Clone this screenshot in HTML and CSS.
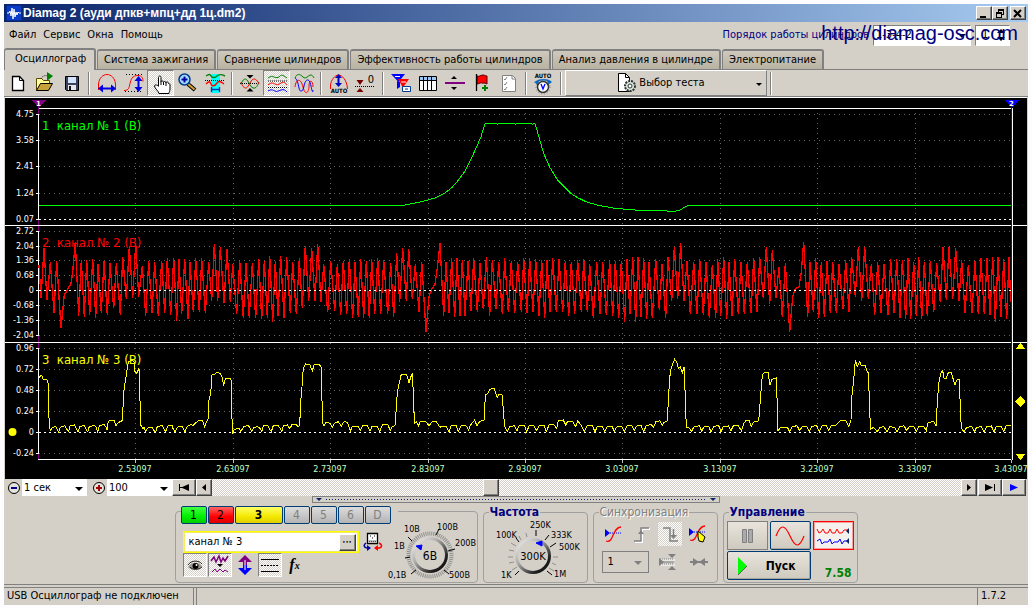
FILE: index.html
```html
<!DOCTYPE html>
<html lang="ru">
<head>
<meta charset="utf-8">
<title>Diamag 2</title>
<link rel="stylesheet" href="styles.css">
</head>
<body>
<div class="window">
  <header class="titlebar">
    <svg class="app-icon" width="16" height="16" viewBox="0 0 16 16"><rect width="16" height="16" fill="#0a3cc8"/><rect x="0" y="0" width="16" height="16" fill="none" stroke="#061c5a"/><path d="M1 8h2l1-2 1 5 1-8 1 11 1-10 1 8 1-5 1 3 1-3 1 1h2" fill="none" stroke="#fff"/></svg>
    <h1 class="title">Diamag 2 (ауди дпкв+мпц+дд 1ц.dm2)</h1>
    <button class="win-btn" aria-label="Свернуть"><svg width="12" height="11" viewBox="0 0 12 11"><path d="M2 8h6v2H2z"/></svg></button>
    <button class="win-btn" aria-label="Восстановить"><svg width="12" height="11" viewBox="0 0 12 11"><path d="M4 1h6v2H4zM4 3h1v1H4zM9 3h1v4H8V6h1zM2 4h6v2H2zM2 6h1v4H2zM7 6h1v4H7zM3 9h4v1H3z"/></svg></button>
    <button class="win-btn win-close" aria-label="Закрыть"><svg width="12" height="11" viewBox="0 0 12 11"><path d="M2 2l7 7M9 2L2 9" stroke="#000" stroke-width="2"/></svg></button>
  </header>

  <div class="menubar">
    <nav class="menu">
      <a href="#">Файл</a><a href="#">Сервис</a><a href="#">Окна</a><a href="#">Помощь</a>
    </nav>
    <div class="order">
      <label for="order">Порядок работы цилиндров</label>
      <span class="drop order-drop"><select id="order"><option>1-3-4-2</option></select></span>
      <span class="spin"><input id="first" aria-label="Первый цилиндр" value="1"><svg width="10" height="14" viewBox="0 0 10 14"><path d="M5 1l4 4H1zM5 13l4-4H1z"/></svg></span>
      <span class="watermark">http://diamag-osc.com</span>
    </div>
  </div>

  <nav class="tabs">
    <button class="tab tab-on">Осциллограф</button>
    <button class="tab">Система зажигания</button>
    <button class="tab">Сравнение цилиндров</button>
    <button class="tab">Эффективность работы цилиндров</button>
    <button class="tab">Анализ давления в цилиндре</button>
    <button class="tab">Электропитание</button>
  </nav>

  <div class="toolbar">
    <button class="tool" aria-label="Новый"><svg viewBox="0 0 24 24"><path d="M6.500 5.500h7l4 4v10h-11z" fill="#fff" stroke="#000" stroke-width="1.300"/><path d="M13.500 5.500v4h4" fill="none" stroke="#000"/></svg></button>
    <button class="tool" aria-label="Открыть"><svg viewBox="0 0 24 24"><path d="M3.500 19.500v-12h5l2 2h6v4" fill="#ffff9c" stroke="#5a4a00"/><path d="M3.500 19.500l4-7h12l-4 7z" fill="#c8a03c" stroke="#000"/><path d="M8 8c1-3 4-4 7-3" fill="none" stroke="#222" stroke-dasharray="1 1"/><path d="M14 1l6 4-6 5z" fill="#008000"/></svg></button>
    <button class="tool" aria-label="Сохранить"><svg viewBox="0 0 24 24"><path d="M5.500 5.500h13v14h-12l-1-1z" fill="#39435c" stroke="#000"/><path d="M8 6h8v6H8z" fill="#d5e4fb"/><path d="M8 14h8v5H8z" fill="#e8e8e8"/><path d="M9 15h2v4H9z" fill="#111"/></svg></button>
    <i class="sep"></i>
    <button class="tool" aria-label="Период"><svg viewBox="0 0 24 24"><path d="M3.500 19v-6C4 7 8 3.500 12 3.500S20 7 20.500 13v6" fill="none" stroke="red"/><path d="M5 17.500h14" stroke="#0000e0" stroke-width="2"/><path d="M3 17.500l5-4v8zM21 17.500l-5-4v8z" fill="#0000e0"/></svg></button>
    <button class="tool" aria-label="Амплитуда"><svg viewBox="0 0 24 24"><path d="M4 3.500h18M3 20.500h17" stroke="#000" stroke-dasharray="1 2"/><path d="M2 19.500c5 0 5-3 6-7s2-8 8-8c4 0 5 3 5 6" fill="none" stroke="red"/><path d="M16.500 8v10" stroke="#0000e0" stroke-width="2"/><path d="M16.500 5l4 5h-8zM16.500 21l4-5h-8z" fill="#0000e0"/></svg></button>
    <button class="tool pressed" aria-label="Рука"><svg viewBox="0 0 24 24"><path d="M9.500 15V6.500c0-2 2.500-2 2.500 0V11c0-1.500 2.500-1.500 2.500.5 0-1.500 2.500-1.500 2.500.5 0-1.500 2.500-1.500 2.500.5 1 0 1.500.5 1.500 1.500v4c0 2-1 3-1 4.500H10c0-2-4.500-5-4.500-7.500 0-1.500 2.500-1.500 4 .5M12 11v3M14.500 11v3M17 12v3" fill="#fff" stroke="#000"/></svg></button>
    <button class="tool" aria-label="Лупа"><svg viewBox="0 0 24 24"><path d="M12 13l7 6" stroke="#000" stroke-width="4"/><path d="M12 13l6.500 5.500" stroke="#d8a030" stroke-width="2"/><circle cx="8.500" cy="8.500" r="5.500" fill="#a8dcff" stroke="#003c8c" stroke-width="1.500"/><path d="M5.500 8.500h6M8.500 5.500v6" stroke="#0000a0" stroke-width="2"/></svg></button>
    <button class="tool" aria-label="Участок"><svg viewBox="0 0 24 24"><path d="M8 3h9v19H8z" fill="#0ff"/><path d="M2 9.500h20" stroke="#000" stroke-dasharray="1 1"/><path d="M3 5c3-2 4-2 5 0s4 2 6 0 4-2 8 0" fill="none" stroke="green" stroke-width="1.400"/><path d="M3 13c3-3 4-3 5 0s4 2 6-1 4-1 7 1" fill="none" stroke="red" stroke-width="1.400"/><path d="M8.500 16v5M16.500 16v5M9 18.500h7" stroke="#003cb4" stroke-width="1.400"/></svg></button>
    <i class="sep"></i>
    <button class="tool" aria-label="Центр"><svg viewBox="0 0 24 24"><path d="M2 12.500h19" stroke="#000" stroke-dasharray="1 1"/><path d="M3 13c2-5 4-6 6-4s3 7 6 8 5-3 6-6" fill="none" stroke="green"/><path d="M3 11c1 4 3 6 5 6s4-6 6-8 5-1 7 4" fill="none" stroke="red"/><path d="M12 7.500L8.500 4h7zM12 17l-3.500 3.500h7z"/></svg></button>
    <button class="tool pressed" aria-label="Раздельно"><svg viewBox="0 0 24 24"><path d="M3 10h19M3 16.500h19" stroke="#000" stroke-dasharray="1 1"/><path d="M3 7c3-2 4-2 6-1s4 1 6-1 4 0 7 2" fill="none" stroke="green"/><path d="M3 14c3-3 5-2 7-1s3 1 6-1 4 0 6 2" fill="none" stroke="red"/><path d="M3 20c3-2 5-1 7 0s3 0 6-1 4 0 6 2" fill="none" stroke="#00f"/></svg></button>
    <button class="tool" aria-label="Вместе"><svg viewBox="0 0 24 24"><path d="M3 7c2-5 5-4 8-1s5-2 8-2c1 0 2 1 3 3" fill="none" stroke="green"/><path d="M3 16c1-9 6-9 8 0s6 6 6-1 4-6 4 1" fill="none" stroke="red"/><path d="M3 7c2 1 3 5 4 10s4 4 5-2 5-10 7 0 2 4 2 4" fill="none" stroke="#00f"/></svg></button>
    <i class="sep"></i>
    <button class="tool" aria-label="Авто"><svg viewBox="0 0 24 24"><path d="M3.500 18v-4C4 9 8 4 11.500 4S20 9 20.500 18" fill="none" stroke="red"/><path d="M11.500 6v7" stroke="#0000c0" stroke-width="2"/><path d="M11.500 3l3.500 4H8zM11.500 16l3.500-4H8z" fill="#0000c0"/><text class="icon-text" x="12" y="22">AUTO</text></svg></button>
    <button class="tool" aria-label="Ноль"><svg viewBox="0 0 24 24"><path d="M1 15.500h20" stroke="#000" stroke-dasharray="1 1"/><path d="M2.500 9h7L6 14zM2.500 21h7L6 17z" fill="#780000"/><text class="icon-zero" x="17" y="12">0</text></svg></button>
    <i class="sep"></i>
    <button class="tool" aria-label="Фильтр"><svg viewBox="0 0 24 24"><path d="M2 3h14L9.500 11z" fill="#00f"/><path d="M8 10v8l3-2v-5z" fill="#00f"/><path d="M9 8h11l-5 7v4l-2-4z" fill="red"/><path d="M6 5.500h5M12 11h5" stroke="#fff"/><path d="M13.500 15.500h8v5h-8z" fill="#fff" stroke="#003c96"/><path d="M16 18h3" stroke="#003c96"/></svg></button>
    <button class="tool" aria-label="Таблица"><svg viewBox="0 0 24 24"><path d="M3.500 5.500h17v14h-17z" fill="#fff" stroke="#000"/><path d="M4 6h16v3H4z" fill="#9cc8f8"/><path d="M3 9.500h18M7.500 6v13M11.500 6v13M15.500 6v13" stroke="#000"/></svg></button>
    <button class="tool" aria-label="Линия"><svg viewBox="0 0 24 24"><path d="M2 12h20" stroke="purple" stroke-width="2"/><path d="M8 8h6l-3-3zM8 16h6l-3 3z"/></svg></button>
    <button class="tool" aria-label="Флаг"><svg viewBox="0 0 24 24"><path d="M7 5c3 1 3-1 6-1 2 0 2 1 4 1v8c-3-2-4 0-5-1s-3 1-5 1z" fill="red" stroke="#500"/><path d="M6.500 3v17" stroke="#000" stroke-width="1.300"/><path d="M15 14v6M12 17h6" stroke="green" stroke-width="2"/></svg></button>
    <button class="tool" aria-label="Проверка"><svg viewBox="0 0 24 24"><path d="M5.500 4.500h10l3 3v13h-13z" fill="#fff" stroke="#808080"/><path d="M7 8l1 1 2-3M7 13l1 1 2-3M7 18l1 1 2-3M15 5v3h3" fill="none" stroke="#808080"/></svg></button>
    <i class="sep"></i>
    <button class="tool" aria-label="Автонапряжение"><svg viewBox="0 0 24 24"><text class="icon-text" x="11" y="7">AUTO</text><path d="M4 11c4-3 11-3 15 0" fill="none" stroke="#06c" stroke-width="1.600"/><path d="M2 11l5-2-1 5zM20 11l-5-2 1 5z" fill="#06c"/><circle cx="11" cy="16" r="5.500" fill="#fff" stroke="#333" stroke-width="1.500"/><circle cx="11" cy="16" r="7" fill="none" stroke="#777" stroke-dasharray="1 2"/><path d="M9 13l2 5 2-5" fill="none" stroke="#00f" stroke-width="1.300"/></svg></button>
    <i class="sep"></i>
    <button class="test-btn"><svg width="22" height="22" viewBox="0 0 22 22"><path d="M3.500 1.500h7l4 4v14h-11z" fill="#fff" stroke="#000"/><path d="M10.500 1.500v4h4" fill="none" stroke="#000"/><circle cx="15" cy="14" r="5" fill="#d4e8dc" stroke="#333" stroke-width="2" stroke-dasharray="2 1"/><circle cx="15" cy="14" r="2" fill="#fff" stroke="#333"/></svg><span>Выбор теста</span></button>
    <i class="sep"></i>
  </div>

  <svg class="plot" id="plot" viewBox="5 98 1022 381" role="img" aria-label="Осциллограмма"></svg>

  <div class="scrollrow">
    <button class="round-btn" aria-label="Уменьшить"><svg width="14" height="14" viewBox="0 0 14 14"><circle cx="7" cy="7" r="5.500" fill="#e4e2dc" stroke="#000"/><path d="M4 7h6" stroke="#00008c" stroke-width="2"/></svg></button>
    <span class="drop scale-drop"><select aria-label="Время"><option>1 сек</option></select></span>
    <button class="round-btn gap-left" aria-label="Увеличить"><svg width="14" height="14" viewBox="0 0 14 14"><circle cx="7" cy="7" r="5.500" fill="#e4e2dc" stroke="#000"/><path d="M4 7h6M7 4v6" stroke="#a00000" stroke-width="2"/></svg></button>
    <span class="drop scale-drop"><select aria-label="Масштаб"><option>100</option></select></span>
    <button class="bevel wide" aria-label="В начало"><svg width="12" height="9" viewBox="0 0 12 9"><path d="M1 1h1v7H1zM2 4h2v1H2zM3 4.500L11 1v7z"/></svg></button>
    <button class="bevel" aria-label="Назад"><svg width="8" height="9" viewBox="0 0 8 9"><path d="M2 4.500L6 1v7z"/></svg></button>
    <input class="scroll" type="range" min="0" max="100" value="37" aria-label="Прокрутка">
    <button class="bevel" aria-label="Вперёд"><svg width="8" height="9" viewBox="0 0 8 9"><path d="M6 4.500L2 1v7z"/></svg></button>
    <button class="bevel wide gap-1" aria-label="В конец"><svg width="12" height="9" viewBox="0 0 12 9"><path d="M9 4.500L1 1v7zM10 1h1v7h-1z"/></svg></button>
    <button class="bevel wide" aria-label="Пуск просмотра"><svg width="12" height="9" viewBox="0 0 12 9"><path d="M10 4.500L2 1v7z" fill="#00f"/></svg></button>
  </div>

  <main class="panel">
    <button class="splitter" aria-label="Свернуть панель"><i></i></button>
    <div class="groups">
      <fieldset class="group group-channel">
        <legend class="channels">
          <button class="ch ch-1">1</button><button class="ch ch-2">2</button><button class="ch ch-3">3</button><button class="ch">4</button><button class="ch">5</button><button class="ch">6</button><button class="ch">D</button>
        </legend>
        <div class="channel-box">
          <div class="row">
            <span class="name-box"><input aria-label="Имя канала" value="канал № 3"><button class="dots" aria-label="Выбрать">•••</button></span>
            <button class="flat swap" aria-label="Поменять"><svg width="20" height="20" viewBox="0 0 20 20"><path d="M4.500 1.500h10v10h-10z" fill="#fff" stroke="#000" stroke-width="1.300"/><path d="M5 8h9v3H5z" fill="#bbb"/><path d="M6 9.500h8" stroke="green" stroke-dasharray="1 1"/><path d="M7 4h1M9 6h1M11 4h1" stroke="#000"/><path d="M3 11c-3 2-2 5 2 5" fill="none" stroke="#0000a0" stroke-width="1.500"/><path d="M4 13l4 3-4 3z" fill="#0000a0"/><path d="M16 11c4 2 3 5-1 5" fill="none" stroke="red" stroke-width="1.500"/><path d="M15 13l-4 3 4 3z" fill="red"/></svg></button>
          </div>
          <div class="row">
            <button class="flat pressed" aria-label="Видимость"><svg width="22" height="22" viewBox="0 0 22 22"><path d="M4 13c2-5 12-6 14 0-3 4-11 4-14 0z" fill="#a09a90"/><path d="M4 11c3-5 11-5 14-1M6 13c2 3 9 3 12 0" fill="none" stroke="#222"/><circle cx="11.500" cy="12" r="3" fill="#000"/><circle cx="12.500" cy="11" r="1" fill="#fff"/></svg></button>
            <button class="flat pressed" aria-label="Сглаживание"><svg width="22" height="22" viewBox="0 0 22 22"><path d="M2 7l3-4 2 5 3-6 2 6 2-4 2 3 3-5" fill="none" stroke="purple" stroke-width="1.500"/><path d="M8 10h6l-3 3z"/><path d="M3 18l3-3 2 3 3-3 3 3 2-2 3 2" fill="none" stroke="purple"/></svg></button>
            <button class="flat" aria-label="Смещение"><svg width="22" height="22" viewBox="0 0 22 22"><path d="M11 1l7 7h-5v3H9V8H4z" fill="purple"/><path d="M11 21l7-7h-5v-3H9v3H4z" fill="#00f"/><path d="M11 6v10" stroke="#fff"/></svg></button>
            <button class="flat pressed" aria-label="Линии"><svg width="22" height="22" viewBox="0 0 22 22"><path d="M2 5.500h18M2 17.500h18" stroke="#000"/><path d="M2 11.500h18" stroke="#000" stroke-dasharray="2 1"/></svg></button>
            <button class="flat fx" aria-label="Функция"><i>f</i><small>x</small></button>
          </div>
        </div>
        <svg class="knob" width="96" height="60" viewBox="384 522 96 60" role="img" aria-label="Предел 6В">
          <g class="knob-dial" transform="translate(430 556)"><circle r="21.500" class="ring"/><circle r="18" fill="url(#metal)"/><circle r="15" fill="#d4d0c8"/><path class="tickline" d="M-18-14l-4-4M6-20l3-6M18-4l7-2M-20 2l-5 1M-14 15l-5 4M14 15l5 4"/><path d="M-14-9l6-1-1 5z" fill="#00f" stroke="#00f"/></g>
          <text class="kt" x="404" y="533">10В</text><text class="kt" x="437" y="531">100В</text><text class="kt" x="394" y="550">1В</text><text class="kt" x="455" y="547">200В</text><text class="kt" x="388" y="579">0,1В</text><text class="kt" x="449" y="579">500В</text><text class="kv" x="430" y="561">6В</text>
        </svg>
      </fieldset>

      <fieldset class="group group-freq">
        <legend>Частота</legend>
        <svg class="knob" width="100" height="62" viewBox="486 519 100 62" role="img" aria-label="Частота 300K">
          <defs><linearGradient id="metal" x1="0" y1="0" x2="1" y2="1"><stop offset="0" stop-color="#fff"/><stop offset=".4" stop-color="#aaa"/><stop offset=".75" stop-color="#222"/><stop offset="1" stop-color="#000"/></linearGradient></defs>
          <g class="knob-dial" transform="translate(533 556)"><path class="minor" d="M-17-10l-5-3M-19-5l-5-1M-20 1h-5M-19 6l-5 1M-12-16l-2-4M-6-19l-1-4M20 1h5M19 7l4 2M-16 11l-5 3M16 12l5 3"/><circle r="18" fill="url(#metal)"/><circle r="15" fill="#d4d0c8"/><path class="tickline" d="M3-20v-6M12-16l4-5M17-9l6-4M-14 15l-4 4M14 15l5 4M-14-14l-3-4"/><path d="M3-13l6-2v5z" fill="#00f" stroke="#00f"/></g>
          <text class="kt" x="530" y="528">250K</text><text class="kt" x="496" y="538">100K</text><text class="kt" x="551" y="538">333K</text><text class="kt" x="559" y="550">500K</text><text class="kt" x="501" y="578">1K</text><text class="kt" x="554" y="577">1M</text><text class="kv kv-small" x="533" y="560">300K</text>
        </svg>
      </fieldset>

      <fieldset class="group group-sync">
        <legend>Синхронизация</legend>
        <div class="row spread">
          <button class="flat" aria-label="Уровень"><svg width="22" height="22" viewBox="0 0 22 22"><path d="M3 10h16" stroke="#00f" stroke-dasharray="1 1"/><path d="M2 6v8l5-4z" fill="#00f"/><path d="M3 18c8 3 6-14 15-14" fill="none" stroke="red" stroke-width="1.300"/></svg></button>
          <button class="flat" aria-label="Фронт"><svg width="22" height="22" viewBox="0 0 22 22"><path d="M4 19h7V6h8" fill="none" stroke="#fff" stroke-width="2"/><path d="M3 18h7V5h8" fill="none" stroke="#808080" stroke-width="1.500"/><path d="M7 11l3-4 3 4z" fill="#808080"/></svg></button>
          <button class="flat hatch" aria-label="Спад"><svg width="22" height="22" viewBox="0 0 22 22"><path d="M4 5h7v13h8" fill="none" stroke="#808080" stroke-width="1.500"/><path d="M14.500 6v7" stroke="#808080" stroke-width="1.500"/><path d="M11 12h7l-3.500 4z" fill="#808080"/></svg></button>
          <button class="flat" aria-label="Выбор уровня"><svg width="22" height="22" viewBox="0 0 22 22"><path d="M3 9h16" stroke="#00f" stroke-dasharray="1 1"/><path d="M2 5v8l5-4z" fill="#00f"/><path d="M3 17c8 3 6-14 15-14" fill="none" stroke="red" stroke-width="1.300"/><path d="M11 8l7 6-2 5-4-1-1-4z" fill="#ff0" stroke="#000"/></svg></button>
        </div>
        <div class="row spread">
          <span class="drop sync-drop"><select aria-label="Канал синхронизации" disabled><option>1</option></select></span>
          <button class="flat" aria-label="Смещение"><svg width="22" height="22" viewBox="0 0 22 22"><path d="M4 9h14M4 14h14" stroke="#fff"/><path d="M3 8h14M3 13h14" stroke="#808080" stroke-dasharray="1 1"/><path d="M2 7v8l5-4zM11 3h8l-4 4zM11 19h8l-4-4z" fill="#808080"/><path d="M5 11h12" stroke="#808080"/></svg></button>
          <button class="flat" aria-label="Сжатие"><svg width="22" height="22" viewBox="0 0 22 22"><path d="M2 11h18" stroke="#808080" stroke-width="2"/><path d="M5 7v8l6-4zM17 7v8l-6-4z" fill="#808080"/></svg></button>
        </div>
      </fieldset>

      <fieldset class="group group-run">
        <legend>Управление</legend>
        <div class="row run-top">
          <button class="run" aria-label="Пауза"><svg width="34" height="22" viewBox="0 0 34 22"><path d="M12.500 4.500h4v13h-4zM18.500 4.500h4v13h-4z" fill="#aaa" stroke="#808080"/></svg></button>
          <button class="run run-on" aria-label="Синус"><svg width="34" height="22" viewBox="0 0 34 22"><path d="M3 11C8-2 12 0 17 11s9 13 14 0" fill="none" stroke="red" stroke-width="1.200"/></svg></button>
          <button class="run run-red" aria-label="Поток"><svg width="34" height="22" viewBox="0 0 34 22"><path d="M1 4l2 4 2-1 2-3 2 4h3l2-4 2 4h3l2-4 2 4h3l2-3h4" fill="none" stroke="red"/><path d="M1 16l3-2 2 5 2-2h4l2-3 2 5 2-2h4l2-3 2 5 2-3h4" fill="none" stroke="#00f"/><path d="M33 3v6l-3-3zM33 13v6l-3-3z" fill="#0a246a"/></svg></button>
        </div>
        <div class="row run-bottom">
          <button class="run run-start"><svg width="12" height="22" viewBox="0 0 12 22"><path d="M2 2v18l9-9z" fill="#0f0"/><path d="M2 20l9-9" stroke="#555"/></svg><span>Пуск</span></button>
          <output class="value">7.58</output>
        </div>
      </fieldset>
    </div>
  </main>

  <footer class="status"><span class="status-main">USB Осциллограф не подключен</span><span class="status-mid"></span><span class="status-ver">1.7.2</span></footer>
</div>
<script src="plot.js"></script>
</body>
</html>
```
FILE: styles.css
```css
* { box-sizing: border-box; }
body {
  margin: 0;
  padding: 4px;
  background: #fdfdff;
  color: #000;
  font: 11px/14px "DejaVu Sans Condensed", "Liberation Sans", sans-serif;
}
button, input, select { font: inherit; color: inherit; margin: 0; padding: 0; border: 0; border-radius: 0; }
button { display: flex; align-items: center; justify-content: center; background: none; }
svg { display: block; flex: none; }
.window { display: flex; flex-direction: column; background: #d4d0c8; min-height: calc(100vh - 8px); }

.titlebar { display: flex; align-items: center; height: 18px; padding: 0 2px; background: linear-gradient(90deg, #0a246a, #a6caf0); }
.title { flex: 1; margin: 0 0 0 1px; color: #fff; font: bold 12px/18px "Liberation Sans", sans-serif; }
.win-btn, .bevel, .dots {
  background: #d4d0c8;
  border: 1px solid;
  border-color: #fff #404040 #404040 #fff;
  box-shadow: inset -1px -1px #808080;
}
.win-btn { width: 16px; height: 14px; }
.win-close { margin-left: 2px; }

.menubar { display: flex; justify-content: space-between; align-items: center; height: 26px; padding: 0 18px 0 5px; }
.menu { display: flex; gap: 7px; }
.menu a { color: #000; text-decoration: none; }
.order { position: relative; display: flex; align-items: center; gap: 4px; color: #000080; }
.drop { position: relative; display: inline-flex; background: #fff; color: #000; }
.drop select { appearance: none; flex: 1; width: 100%; padding-left: 2px; background: none; opacity: 1; }
.drop::after { content: ""; position: absolute; right: 4px; top: 50%; margin-top: -1px; border: 4px solid transparent; border-top-color: #000; border-bottom: 0; pointer-events: none; }
.order-drop { width: 98px; height: 21px; border: 1px solid; border-color: #808080 #fff #fff #808080; }
.spin { display: flex; align-items: center; width: 35px; height: 21px; background: #fff; color: #000; border: 1px solid; border-color: #808080 #fff #fff #808080; }
.spin input { width: 20px; padding-left: 6px; background: none; }
.watermark { position: absolute; right: -8px; top: -2px; font: 20px/20px "Liberation Sans", sans-serif; color: #000080; white-space: nowrap; }

.tabs { display: flex; align-items: flex-end; gap: 1px; height: 22px; border-bottom: 1px solid #808080; }
.tab { height: 20px; padding: 0 6px; border: 1px solid #808080; border-width: 2px 2px 0 1px; border-radius: 3px 3px 0 0; background: linear-gradient(#cfc9bd, #b8b2a2); white-space: nowrap; }
.tab-on { height: 22px; margin-bottom: -1px; padding: 0 8px 2px 10px; background: #d4d0c8; }

.toolbar { display: flex; align-items: center; height: 27px; border-bottom: 1px solid #808080; }
.tool { width: 27px; height: 26px; flex: none; }
.tool svg { width: 24px; height: 24px; }
.pressed, .hatch { background: conic-gradient(#fff 25%, #d4d0c8 0 50%, #fff 0 75%, #d4d0c8 0) 0 0 / 2px 2px; }
.pressed { border: 1px solid; border-color: #808080 #fff #fff #808080; }
.sep { flex: none; width: 2px; height: 23px; margin: 0 3px; border-left: 1px solid #808080; border-right: 1px solid #fff; }
.icon-text { font: bold 6px "DejaVu Sans Condensed", sans-serif; text-anchor: middle; }
.icon-zero { font: 11px "DejaVu Sans Condensed", sans-serif; text-anchor: middle; }
.test-btn { position: relative; width: 202px; height: 26px; gap: 2px; padding-right: 12px; border: 1px solid; border-color: #fff #808080 #808080 #fff; }
.test-btn::after { content: ""; position: absolute; right: 4px; top: 12px; border: 3px solid transparent; border-top-color: #000; border-bottom: 0; }

.plot { width: calc(100% - 2px); margin-left: 1px; height: auto; background: #000; border-top: 1px solid #fff; }
.plot text { font: 9px "DejaVu Sans Condensed", sans-serif; }
.plot .name { font-size: 13px; white-space: pre; }
.plot .mark { font: bold 7px "DejaVu Sans", sans-serif; fill: #fff; text-anchor: middle; }
.plot path, .plot line { shape-rendering: crispEdges; }
.plot .grid { stroke: #666; stroke-dasharray: 1 4; }
.plot .zero { stroke: #fff; stroke-dasharray: 2 3; }
.plot .frame { stroke: #fff; }
.plot .level { fill: #fff; text-anchor: end; }
.plot .time { fill: #c0ffc0; text-anchor: middle; }

.scrollrow { display: flex; height: 17px; padding: 0 2px 0 1px; }
.round-btn { width: 17px; }
.gap-left { margin-left: 3px; }
.gap-1 { margin-left: 1px; }
.scale-drop { width: 65px; }
.bevel { width: 16px; flex: none; }
.wide { width: 24px; }
.scroll { appearance: none; flex: 1; min-width: 0; height: 17px; background: conic-gradient(#fff 25%, #d4d0c8 0 50%, #fff 0 75%, #d4d0c8 0) 0 0 / 2px 2px; }
.scroll::-webkit-slider-thumb { appearance: none; width: 16px; height: 17px; background: #d4d0c8; border: 1px solid; border-color: #fff #404040 #404040 #fff; box-shadow: inset -1px -1px #808080; }

.panel { flex: 1; display: flex; flex-direction: column; align-items: center; border-bottom: 1px solid #808080; }
.splitter { width: 408px; max-width: 100%; height: 7px; padding: 0 3px; border: 1px solid #808080; justify-content: space-between; }
.splitter::before, .splitter::after { content: ""; border: 3px solid transparent; border-top-color: #0a246a; border-bottom: 0; }
.splitter i { flex: 1; height: 1px; margin: 0 4px; background: repeating-linear-gradient(90deg, #0a246a 0 1px, transparent 1px 3px); }
.groups { display: flex; gap: 5px; padding: 3px 0 1px; }
.group { margin: 0; min-width: 0; height: 77px; padding: 0; border: 1px solid #a0a0a0; border-radius: 4px; }
.group legend { height: 12px; margin-left: 5px; padding: 0 1px; font: bold 12px/12px "DejaVu Sans Condensed", sans-serif; color: #000080; }
.group-channel { width: 303px; display: flex; }
.group .channels { display: flex; gap: 1px; height: 11px; padding: 0 7px 0 0; }
.ch { width: 26px; height: 18px; border: 1px solid #003c74; border-radius: 2px; background: linear-gradient(#dcdcdc, #b4b4b4); color: #808080; font: 12px "DejaVu Sans Condensed", sans-serif; }
.ch-1 { background: linear-gradient(#4f4, #0e0 60%, #0c0); color: #000; }
.ch-2 { background: linear-gradient(#f66, #f00 60%, #d00); color: #000; }
.ch-3 { width: 48px; background: linear-gradient(#ff6, #f4e800 60%, #e0d000); color: #000; font-weight: bold; }
.channel-box { padding: 14px 0 0 7px; width: 208px; }
.row { display: flex; align-items: center; gap: 1px; }
.name-box { display: flex; align-items: center; width: 178px; height: 22px; padding: 1px 2px; background: #fff; border: 1px solid #ff0; box-shadow: inset 0 0 0 1px #f4ec60; }
.name-box input { flex: 1; min-width: 0; padding-left: 3px; background: none; }
.dots { width: 17px; height: 17px; font-size: 6px; }
.flat { width: 24px; height: 24px; flex: none; }
.swap { margin-left: 2px; width: 22px; height: 22px; }
.fx { font: bold 16px "Liberation Serif", serif; }
.fx small { font-size: 10px; font-style: italic; }
.knob { margin-top: 4px; }
.ring { fill: none; stroke: #909090; stroke-width: 4; stroke-dasharray: 1 1; }
.minor { stroke: #909090; }
.tickline { stroke: #000; }
.kt { font: 9px "DejaVu Sans Condensed", sans-serif; }
.kv { font: 12px "DejaVu Sans Condensed", sans-serif; text-anchor: middle; }
.kv-small { font-size: 11px; }
.group-freq { width: 105px; }
.group-freq .knob { margin: 1px 0 0 2px; }
.group-sync { width: 125px; }
.group-sync legend { color: #808080; font-weight: normal; text-shadow: 1px 1px #fff; }
.spread { justify-content: space-between; padding: 4px 6px 0 8px; }
.sync-drop { width: 47px; height: 22px; background: none; border: 1px solid #808080; }
.sync-drop select { padding-left: 5px; color: #000; }
.sync-drop::after { border-top-color: #808080; right: 6px; }
.group-run { width: 135px; }
.run { width: 41px; height: 29px; border: 1px solid #808080; background: linear-gradient(#e8e4dc, #cfcabf); }
.run-top { gap: 2px; padding: 3px 0 0 3px; }
.run-bottom { padding: 1px 5px 0 3px; justify-content: space-between; }
.run-on, .run-start { border: 1px solid #003c74; border-radius: 2px; box-shadow: inset -1px -1px #a8a498; }
.run-red { border: 1px solid red; background: #f4f0ec; box-shadow: inset 0 0 0 1px #f8a0a0; }
.run-start { width: 84px; height: 29px; padding: 0 14px 0 8px; justify-content: space-between; font-weight: bold; font-size: 12px; }
.value { align-self: flex-end; color: green; font: bold 12px/14px "DejaVu Sans Condensed", sans-serif; }

.status { display: flex; height: 18px; margin-top: 2px; border-top: 1px solid #808080; line-height: 16px; }
.status span { border-right: 1px solid #808080; padding-left: 3px; }
.status-main { width: 190px; }
.status-mid { flex: 1; margin-left: 2px; border-left: 1px solid #808080; }
.status .status-ver { width: 50px; border: 0; }
```
FILE: plot.js
```js
const svg = document.getElementById("plot");
const NS = "http://www.w3.org/2000/svg";
const LEFT = 38, RIGHT = 1012;
const UNIT = 3;

function add(tag, attrs, text) {
  const el = document.createElementNS(NS, tag);
  for (const k in attrs) el.setAttribute(k, attrs[k]);
  if (text !== undefined) el.textContent = text;
  svg.appendChild(el);
}
function hline(cls, y, x1 = LEFT, x2 = RIGHT) {
  add("line", { class: cls, x1, x2, y1: y + 0.5, y2: y + 0.5 });
}
function vline(attrs, x, y1, y2) {
  add("line", { ...attrs, x1: x + 0.5, x2: x + 0.5, y1, y2 });
}

const times = [[135, "2.53097"], [233, "2.63097"], [330, "2.73097"], [428, "2.83097"], [525, "2.93097"],
  [622, "3.03097"], [720, "3.13097"], [817, "3.23097"], [915, "3.33097"], [1011, "3.43097"]];

const channels = [
  { name: "1  канал № 1 (В)", color: "#00ff00", nameY: 130, zero: 219, base: 285, width: 1,
    levels: [[114, "4.75"], [140, "3.58"], [166, "2.41"], [193, "1.24"], [219, "0.07"]],
    parts: [
      [0, "117,331"],
      [1035, "175,331 200,326 230,320 270,309 300,294 320,278 340,256 360,228 380,188 395,155 408,125 420,86 455,86 458,88 462,86 508,86 511,88 514,86 560,86 563,88 567,85 571,88 577,108 585,138 598,180 615,218 638,256 660,278 680,297 700,309 725,321 760,331 810,340 880,346 940,347 990,349 1005,345 1025,333"],
      [2064, "5,331 968,331"]] },
  { name: "2  канал № 2 (В)", color: "#ff0000", nameY: 247, zero: 290, base: 285, width: 1.3,
    levels: [[231, "2.72"], [246, "2.04"], [260, "1.36"], [275, "0.68"], [290, "0"], [305, "-0.68"], [320, "-1.36"], [335, "-2.04"]],
    parts: [
      [0, "117,510 123,610 132,460 141,615 151,502 162,653 170,498 183,700 193,600 203,583 213,565 218,530 226,440 236,662 244,495 253,665 260,495 269,660 278,492 287,668 294,508 304,655 312,498 322,660 330,505 341,640 349,505 361,660 368,485 379,612 388,455 398,610 407,445 416,605 427,512 437,662 446,497 456,653 464,502 475,662 485,497 494,655 502,490 512,660 521,488 530,677 537,492 545,658 554,492 564,673 570,502 580,652 587,490 598,652 605,490 616,655 626,500 635,618 643,448 653,618 661,457 672,625 681,462 691,622 698,508 710,658 719,497 730,670 738,503 748,668 757,505 767,670 776,492 785,673 793,497 802,668 809,482 818,682 826,497 834,663 842,484 852,668 860,487 871,655 878,500 889,658 898,490 907,638 916,452 926,618 935,460 945,618 953,448 963,622 971,508 983,652 992,497 1004,648 1012,508 1022,660 1030,497"],
      [1035, "5,657 13,492 23,670 30,502 40,665 47,492 56,668 64,498 73,670 80,492 89,656 98,490 107,658 116,496 128,656 137,505 146,665 155,475 164,622 173,460 184,618 191,462 202,612 211,508 222,650 230,500 243,710 252,605 260,582 270,568 277,520 285,445 296,662 303,502 312,653 320,490 329,667 336,490 345,662 352,495 360,662 369,498 378,647 386,490 397,650 405,505 415,643 424,487 434,662 442,496 453,643 461,500 472,658 479,490 490,652 499,498 509,655 518,500 529,652 536,490 546,655 554,490 564,652 572,492 582,663 590,496 599,668 606,496 615,652 623,490 634,652 642,492 653,650 661,497 671,663 679,500 689,658 698,496 709,650 716,492 727,652 734,506 745,668 755,500 765,658 773,500 784,660 794,497 803,664 811,497 821,670 829,497 839,680 846,492 855,658 863,487 872,680 879,487 888,665 896,490 905,673 912,502 922,670 932,492 943,645 951,508 962,670 969,485 980,618 988,455 998,612 1007,445 1017,618 1026,497"],
      [2064, "7,658 17,500 27,658 35,492 46,660 54,500 64,668 73,510 83,670 89,492 98,663 107,487 116,673 123,500 132,663 140,492 151,658 159,502 169,658 178,500 189,655 197,490 207,652 215,487 226,610 235,456 245,628 253,466 264,608 273,515 283,665 292,505 305,710 314,605 322,582 333,575 340,530 347,440 359,665 366,502 376,652 383,490 392,670 400,502 409,665 417,498 427,655 434,500 445,655 453,508 465,642 473,496 483,650 491,485 502,605 511,456 521,618 530,455 541,612 550,508 560,661 569,502 579,653 588,508 600,660 608,492 618,655 626,492 636,670 643,496 653,672 660,490 668,672 677,500 685,663 692,487 701,673 709,502 718,663 727,497 737,652 746,503 757,622 765,455 775,615 783,455 794,612 803,460 813,618 821,496 831,655 841,510 852,655 861,497 871,658 879,490 889,658 897,490 906,660 914,487 922,682 930,487 939,667 947,492 956,673 963,487 968,620"]] },
  { name: "3  канал № 3 (В)", color: "#ffff00", nameY: 364, zero: 432, base: 1020, width: 1,
    levels: [[348, "0.96"], [369, "0.72"], [390, "0.48"], [411, "0.24"], [432, "0"], [453, "-0.24"]],
    parts: [
      [0, "117,114 122,107 126,108 130,119 141,119 144,128 146,200 148,262 152,270 158,262 168,260 172,270 176,277 181,262 195,257 200,268 206,275 210,258 223,255 229,265 234,276 239,260 252,256 258,268 263,275 268,260 282,256 288,262 293,275 298,257 312,253 318,262 321,270 324,250 328,241 343,241 348,258 354,248 366,242 370,190 372,150 378,110 385,65 395,60 403,66 405,95 410,100 417,85 419,150 422,255 428,265 433,263 437,275 443,264 457,262 462,272 467,275 472,260 487,256 492,266 497,275 503,258 516,256 520,268 526,276 532,262 546,258 550,265 555,275 561,260 572,254 580,256 586,250 594,243 608,242 614,262 617,250 624,238 627,180 632,160 636,105 645,102 651,97 660,100 666,110 671,137 676,115 690,115 693,120 695,190 697,283 703,268 717,265 722,275 731,260 745,256 750,265 755,275 761,262 773,260 780,265 785,275 790,257 803,256 809,268 814,275 820,257 834,255 840,265 845,275 850,258 862,255 868,265 873,260 877,252 890,255 895,260 899,255 902,185 906,140 910,85 917,72 930,75 937,93 943,72 955,72 963,80 965,150 968,250 972,258 978,247 990,250 997,262 1003,250 1015,245 1024,258 1030,248"],
      [1035, "0,243 8,250 17,274 22,258 40,258 46,272 52,258 66,255 75,272 82,258 97,258 104,275 112,255 128,253 136,272 140,262 151,255 155,180 160,140 169,103 185,105 192,128 197,112 202,100 206,180 208,250 214,245 220,258 226,245 243,245 252,258 260,246 274,245 285,262 293,258 304,260 312,277 318,258 333,256 340,275 348,258 363,257 371,270 376,256 389,240 396,258 404,244 418,240 421,165 428,160 434,148 447,145 457,172 462,162 472,165 476,230 480,262 487,275 494,260 508,257 516,272 522,258 538,256 545,275 552,258 566,256 575,272 582,257 597,256 604,275 612,255 627,254 635,265 640,243 655,240 662,255 668,243 682,243 692,260 698,242 711,260 718,275 726,258 742,257 750,275 757,260 771,258 779,275 786,260 800,258 808,273 816,260 830,258 838,275 845,258 860,257 868,272 875,258 888,256 896,275 904,256 918,254 926,262 932,245 945,242 952,257 957,247 967,243 971,160 976,95 983,72 989,58 996,68 1000,85 1006,80 1012,98 1018,80 1020,150 1024,262 1029,262"],
      [2064, "4,264 10,275 18,260 34,257 41,273 48,260 62,260 69,275 77,259 92,257 99,275 106,260 121,258 129,272 136,258 150,256 160,272 168,250 173,242 184,242 190,259 196,247 212,242 217,180 223,105 229,97 240,97 246,136 252,118 265,114 268,200 270,272 278,262 298,262 305,275 312,260 327,257 335,272 342,260 356,258 364,275 372,259 386,257 394,275 402,258 415,257 422,270 430,257 445,255 455,243 473,241 482,259 489,240 492,165 497,120 502,60 508,80 515,65 520,77 532,77 538,95 542,100 544,200 548,268 556,262 568,275 576,262 588,260 597,275 605,260 620,262 627,275 635,260 648,257 656,272 663,260 678,260 685,275 692,260 708,260 715,272 720,248 737,244 744,258 748,190 752,130 758,100 764,92 768,115 775,115 781,98 790,98 801,136 806,120 814,118 817,200 820,265 828,275 836,262 852,260 859,275 866,262 880,260 888,275 896,260 910,258 918,275 925,260 939,258 947,275 954,258 968,257"]] },
];

vline({ stroke: "#800080" }, LEFT, 106, 460);
for (const [x] of times.slice(0, -1)) vline({ class: "grid" }, x, 113, 459);
for (const ch of channels) {
  for (const [y] of ch.levels) if (y !== ch.zero) hline("grid", y, LEFT + 1, RIGHT);
}
hline("frame", 108, LEFT + 1);
hline("frame", 225, 5, 1027);
hline("frame", 342, 5, 1027);
hline("frame", 459, LEFT, RIGHT + 1);
for (const ch of channels) {
  const ys = ch.levels.map(l => l[0]);
  vline({ class: "frame" }, LEFT, ys[0], ys[ys.length - 1] + 1);
  for (const [y, label] of ch.levels) {
    hline("frame", y, LEFT - 2, LEFT);
    add("text", { class: "level", x: 34, y: y + 3 }, label);
  }
  add("text", { class: "name", x: 42, y: ch.nameY, fill: ch.color }, ch.name);
  const pts = [];
  for (const [dx, data] of ch.parts) {
    for (const p of data.split(" ")) {
      const [x, y] = p.split(",").map(Number);
      pts.push(((x + dx) / UNIT).toFixed(1) + " " + ((y + ch.base) / UNIT).toFixed(1));
    }
  }
  add("path", { d: "M" + pts.join("L"), fill: "none", stroke: ch.color, "stroke-width": ch.width });
  hline("zero", ch.zero, LEFT + 1, RIGHT);
}
vline({ stroke: "#0000ff" }, RIGHT - 1, 107, 460);
vline({ class: "frame" }, RIGHT, 108, 460);
for (const [x, t] of times) {
  vline({ stroke: "#c0c0c0" }, x, 460, 463);
  add("text", { class: "time", x, y: 472 }, t);
}
add("path", { d: "M31 100h15l-7 8z", fill: "#800080" });
add("text", { class: "mark", x: 38.5, y: 106 }, "1");
add("path", { d: "M1004 100h15l-7 8z", fill: "#0000ff" });
add("text", { class: "mark", x: 1011.5, y: 106 }, "2");
add("circle", { cx: 12.5, cy: 432, r: 4, fill: "#ff0" });
add("path", { d: "M1020.500 343l5 6h-10zM1020.500 396l5 5.500-5 5.500-5-5.500zM1015.500 454h10l-5 6z", fill: "#ff0" });
```
